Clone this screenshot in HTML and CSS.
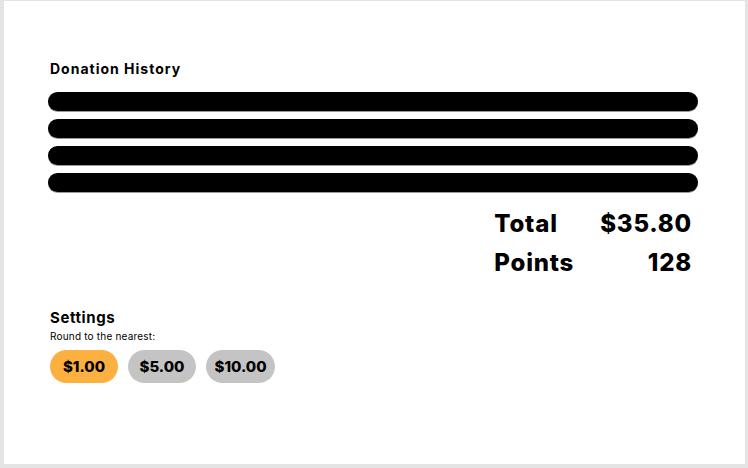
FILE: index.html
```html
<!DOCTYPE html>
<html lang="en">
<head>
    <meta charset="UTF-8">
    <meta name="viewport" content="width=device-width, initial-scale=1.0">
    <title>Donations</title>
    <link rel="stylesheet" href="styles.css">
</head>
<body>
    <div id="card">
        <h2 class="title">Donation History</h2>
        <div class="history">
            <div class="bar"></div>
            <div class="bar"></div>
            <div class="bar"></div>
            <div class="bar"></div>
        </div>

        <div class="summary">
            <span>Total</span><span class="num">$35.80</span>
            <span>Points</span><span class="num">128</span>
        </div>

        <div class="settings">
            <h2 class="title big">Settings</h2>
            <p class="hint">Round to the nearest:</p>
            <div class="options">
                <button class="opt active">$1.00</button>
                <button class="opt">$5.00</button>
                <button class="opt">$10.00</button>
            </div>
        </div>
    </div>
</body>
</html>
```

FILE: styles.css
```css
html, body{
    margin: 0;
    height: 100%;
}

body{
    background: #e4e4e4;
    font-family: Inter, "Noto Sans", sans-serif;
    color: #000;
    padding: 1px 3px 4px 4px;
    box-sizing: border-box;
}

#card{
    background: #fff;
    height: 100%;
    box-sizing: border-box;
    padding: 53px 47px 0 44px;
}

.title{
    margin: 0 0 0 2px;
    font-size: 14px;
    font-weight: 700;
    line-height: 30px;
    letter-spacing: 1px;
}

.history{
    margin-top: 8px;
    display: flex;
    flex-direction: column;
    gap: 8px;
}

.bar{
    height: 19px;
    border-radius: 10px;
    background: #000;
    box-shadow: 0 1px 0 #9a9a9a;
}

.summary{
    display: grid;
    grid-template-columns: auto auto;
    column-gap: 26px;
    justify-content: end;
    margin: 12px 6px 0 0;
    font-size: 24px;
    font-weight: 800;
    line-height: 39px;
    letter-spacing: 0.8px;
}

.summary .num{
    text-align: right;
}

.settings{
    margin-top: 26px;
}

.title.big{
    font-size: 15px;
    line-height: 20px;
    letter-spacing: 0.6px;
}

.hint{
    margin: 0 0 0 2px;
    font-size: 10px;
    line-height: 16px;
    letter-spacing: 0.2px;
}

.options{
    display: flex;
    gap: 10px;
    margin: 6px 0 0 2px;
}

.opt{
    border: 0;
    width: 68px;
    height: 33px;
    padding: 0;
    border-radius: 17px;
    background: #c4c4c4;
    font-family: inherit;
    font-size: 15px;
    font-weight: 800;
    color: #000;
}

.opt:last-child{
    width: 69px;
}

.opt.active{
    background: #fbb040;
}
```
